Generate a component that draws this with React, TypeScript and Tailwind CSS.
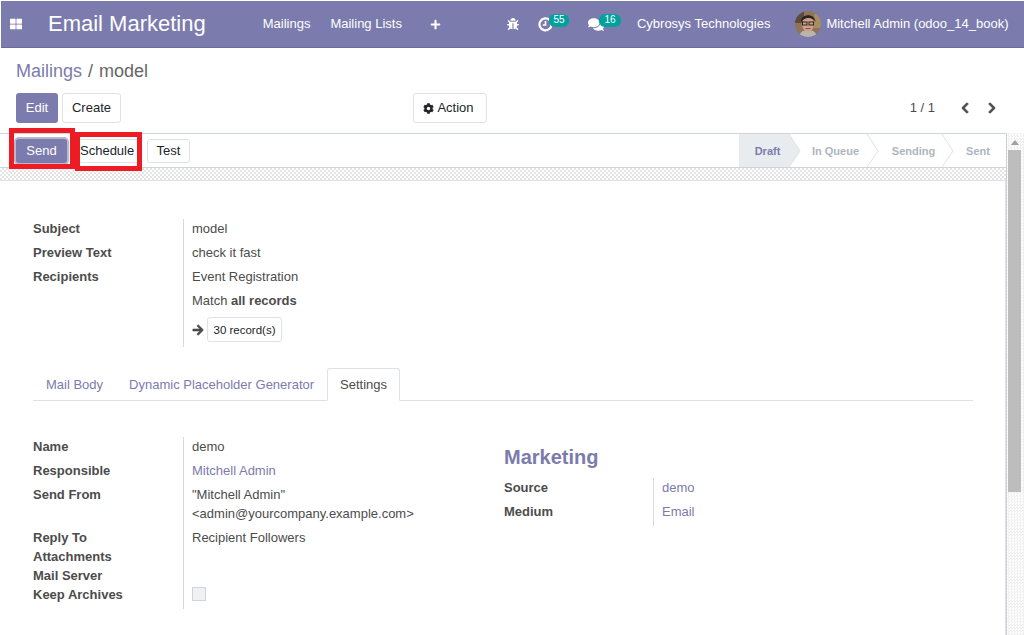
import type { ReactNode } from 'react'
import {
  FaArrowRight,
  FaBug,
  FaChevronLeft,
  FaChevronRight,
  FaCog,
  FaComments,
  FaPlus,
  FaThLarge,
} from 'react-icons/fa'

function Avatar() {
  return (
    <svg width="26" height="26" viewBox="0 0 26 26" className="shrink-0">
      <defs>
        <clipPath id="avatar-clip">
          <circle cx="13" cy="13" r="13" />
        </clipPath>
      </defs>
      <g clipPath="url(#avatar-clip)">
        <rect width="26" height="26" fill="#8f7458" />
        <rect x="0" y="0" width="9" height="12" fill="#5c4a3c" />
        <rect x="19" y="3" width="7" height="14" fill="#a88d62" />
        <path d="M4 26c1-6 5-7 9-7s8 1 9 7z" fill="#b9b4b0" />
        <ellipse cx="13" cy="13" rx="6" ry="7.5" fill="#cfa18c" />
        <path d="M6 11C5 3 20 1 20.5 11c-2-3-4-4-7-4s-5 1-7.500 4z" fill="#2a2320" />
        <rect x="7.500" y="11" width="4.500" height="3" fill="none" stroke="#2b2422" strokeWidth="1" />
        <rect x="14" y="11" width="4.500" height="3" fill="none" stroke="#2b2422" strokeWidth="1" />
        <path d="M10.500 17.500h5" stroke="#8d4a3c" strokeWidth="1.200" />
      </g>
    </svg>
  )
}

function ActivityIcon() {
  return (
    <svg width="15" height="15" viewBox="0 0 15 15" fill="none" stroke="currentColor" className="shrink-0">
      <path d="M11.800 3.200A6 6 0 1 0 13.500 7.500" strokeWidth="2.200" />
      <path d="M7.500 4v4H4.800" strokeWidth="1.600" />
    </svg>
  )
}

function Badge({ children, width }: { children: ReactNode; width: string }) {
  return (
    <span
      className={`absolute -top-[3px] left-[11px] flex h-[13px] items-center justify-center rounded-[6px] bg-[#00a09d] text-[10px] leading-none text-white ${width}`}
    >
      {children}
    </span>
  )
}

function Navbar() {
  return (
    <nav className="ml-px mt-px flex h-[47px] shrink-0 items-center whitespace-nowrap border-b border-[#6a6999] bg-[#7c7bad] text-[13px] text-white">
      <FaThLarge className="ml-[9px] h-[12px] w-[12px]" />
      <span className="ml-[26px] text-[22px] leading-none">Email Marketing</span>
      <span className="ml-[57px]">Mailings</span>
      <span className="ml-[20px]">Mailing Lists</span>
      <FaPlus className="ml-[28px] h-[11px] w-[11px]" />
      <FaBug className="ml-[66px] h-[12px] w-[12px]" />
      <span className="relative ml-[19px] flex">
        <ActivityIcon />
        <Badge width="w-[20px]">55</Badge>
      </span>
      <span className="relative ml-[35px] flex">
        <FaComments className="h-[15px] w-[16px]" />
        <Badge width="w-[22px]">16</Badge>
      </span>
      <span className="ml-[33px]">Cybrosys Technologies</span>
      <span className="ml-[25px] flex items-center gap-[5px]">
        <Avatar />
        Mitchell Admin (odoo_14_book)
      </span>
    </nav>
  )
}

function ControlPanel() {
  return (
    <div className="h-[85px] shrink-0 px-[16px]">
      <div className="pt-[11px] text-[18px] leading-[24px] text-[#666]">
        <span className="text-[#7c7bad]">Mailings</span>
        <span className="mx-[6px]">/</span>
        <span>model</span>
      </div>
      <div className="mt-[10px] flex items-center">
        <button className="h-[30px] w-[42px] rounded-[3px] bg-[#7c7bad] text-[13px] text-white">Edit</button>
        <button className="ml-[4px] h-[30px] w-[59px] rounded-[3px] border border-[#dee2e6] bg-white text-[13px] text-[#212529]">
          Create
        </button>
        <button className="ml-[292px] flex h-[30px] w-[74px] items-center justify-center gap-[3px] rounded-[3px] border border-[#dee2e6] bg-white pr-[3px] text-[13px] text-[#212529]">
          <FaCog className="h-[11px] w-[11px]" />
          Action
        </button>
        <span className="ml-auto text-[13px] text-[#4c4c4c]">1 / 1</span>
        <FaChevronLeft className="ml-[26px] h-[12px] w-[8px] text-[#4c4c4c]" stroke="currentColor" strokeWidth={40} />
        <FaChevronRight className="ml-[19px] mr-[12px] h-[12px] w-[8px] text-[#4c4c4c]" stroke="currentColor" strokeWidth={40} />
      </div>
    </div>
  )
}

function StageArrow({ fill }: { fill: string }) {
  return (
    <svg width="12" height="34" viewBox="0 0 12 34" className="absolute -right-[11px] top-0">
      <path d="M0 0L11 17L0 33" fill={fill} stroke="#dee2e6" strokeWidth="1" />
    </svg>
  )
}

function Stage({ label, width, active }: { label: string; width: string; active?: boolean }) {
  return (
    <div
      className={`relative flex h-full items-center justify-center text-[11px] font-bold ${width} ${
        active ? 'bg-[#e9ecef] text-[#7c7bad]' : 'text-[#adb5bd]'
      }`}
    >
      {label}
      {label !== 'Sent' && <StageArrow fill={active ? '#e9ecef' : '#fff'} />}
    </div>
  )
}

function StatusBar() {
  return (
    <div className="flex h-[35px] shrink-0 items-center justify-between border-y border-[#ced4da] bg-white pl-[16px]">
      <div className="flex items-center gap-[6px] text-[13px]">
        <button className="flex h-[24px] w-[51px] items-center justify-center rounded-[3px] bg-[#7c7bad] text-white ring-2 ring-[#b9b9c9]">
          Send
        </button>
        <button className="ml-[5px] flex h-[24px] w-[63px] items-center justify-start rounded-[3px] border border-[#dee2e6] bg-white pl-[1px] text-[#212529]">
          Schedule
        </button>
        <button className="flex h-[24px] w-[43px] items-center justify-center rounded-[3px] border border-[#dee2e6] bg-white text-[#212529]">
          Test
        </button>
      </div>
      <div className="flex h-full">
        <Stage label="Draft" width="w-[51px] pl-[6px]" active />
        <Stage label="In Queue" width="w-[78px] pl-[13px]" />
        <Stage label="Sending" width="w-[75px] pl-[16px]" />
        <Stage label="Sent" width="w-[63px] pl-[7px]" />
      </div>
    </div>
  )
}

function Field({
  label,
  children,
  rowClass = 'h-[24px]',
}: {
  label: string
  children?: ReactNode
  rowClass?: string
}) {
  return (
    <div className={`flex ${rowClass}`}>
      <div className="w-[150px] shrink-0 font-bold text-[#4c4c4c]">{label}</div>
      <div className="pl-[9px] text-[#4c4c4c]">{children}</div>
    </div>
  )
}

function Tabs() {
  return (
    <div className="mt-[21px] flex h-[33px] w-[940px] items-end border-b border-[#dee2e6]">
      <span className="ml-[13px] pb-[5px] text-[#7c7bad]">Mail Body</span>
      <span className="ml-[26px] pb-[5px] text-[#7c7bad]">Dynamic Placeholder Generator</span>
      <span className="-mb-px ml-[13px] flex h-[33px] w-[73px] items-center justify-center rounded-t-[3px] border border-[#dee2e6] border-b-white bg-white text-[#4c4c4c]">
        Settings
      </span>
    </div>
  )
}

function Scrollbar() {
  return (
    <div className="flex w-[18px] shrink-0 flex-col items-start border-l border-[#cfcfd8] bg-[repeating-conic-gradient(#f0f0f0_0_25%,#fff_0_50%)] bg-[length:3px_3px] pl-px">
      <svg width="8" height="5" viewBox="0 0 8 5" className="ml-[3px] mt-[7px]">
        <path d="M4 0L8 5H0z" fill="#a5a0a0" />
      </svg>
      <div className="mt-[5px] h-[342px] w-[13px] bg-[#bdbdbd]" />
    </div>
  )
}

export default function App() {
  return (
    <div className="relative flex h-[635px] w-[1024px] flex-col overflow-hidden bg-white font-['Liberation_Sans',Arial,sans-serif] text-[13px] leading-[20px]">
      <Navbar />
      <ControlPanel />
      <div className="flex min-h-0 flex-1">
        <div className="flex min-w-0 flex-1 flex-col">
          <StatusBar />
          <div className="min-h-0 flex-1 bg-[repeating-conic-gradient(#e4e4e4_0_25%,#fff_0_50%)] bg-[length:4px_4px] pt-[12px]">
            <div className="h-full border-r border-t border-[#dee2e6] bg-white pl-[33px] pt-[38px]">
              <div className="w-[400px]">
                <div className="relative">
                  <div className="absolute bottom-0 left-[150px] top-0 w-px bg-[#d9d9d9]" />
                  <Field label="Subject">model</Field>
                  <Field label="Preview Text">check it fast</Field>
                  <Field label="Recipients">Event Registration</Field>
                  <Field label="">
                    Match <b>all records</b>
                  </Field>
                  <Field label="" rowClass="h-[32px]">
                    <span className="flex items-center gap-[3px] pt-[2px]">
                      <FaArrowRight className="h-[12px] w-[12px] text-[#4c4c4c]" stroke="currentColor" strokeWidth={30} />
                      <span className="flex h-[25px] w-[75px] items-center justify-center rounded-[3px] border border-[#dee2e6] text-[11.5px] text-[#212529]">
                        30 record(s)
                      </span>
                    </span>
                  </Field>
                </div>
              </div>
              <Tabs />
              <div className="mt-[36px] flex">
                <div className="relative w-[471px]">
                  <div className="absolute bottom-0 left-[150px] top-0 w-px bg-[#d9d9d9]" />
                  <Field label="Name">demo</Field>
                  <Field label="Responsible">
                    <span className="text-[#7c7bad]">Mitchell Admin</span>
                  </Field>
                  <Field label="Send From" rowClass="h-[43px]">
                    <span className="block leading-[19px]">"Mitchell Admin"</span>
                    <span className="block leading-[19px]">&lt;admin@yourcompany.example.com&gt;</span>
                  </Field>
                  <Field label="Reply To" rowClass="h-[19px]">
                    Recipient Followers
                  </Field>
                  <Field label="Attachments" rowClass="h-[19px]" />
                  <Field label="Mail Server" rowClass="h-[19px]" />
                  <Field label="Keep Archives" rowClass="h-[24px]">
                    <span className="mt-[2px] block h-[14px] w-[14px] border border-[#ced4da] bg-[#f1f1f3]" />
                  </Field>
                </div>
                <div>
                  <div className="mt-[7px] text-[20px] font-bold leading-[26px] text-[#7c7bad]">Marketing</div>
                  <div className="relative mt-[8px]">
                    <div className="absolute bottom-0 left-[149px] top-0 w-px bg-[#d9d9d9]" />
                    <div className="flex h-[24px]">
                      <div className="w-[149px] font-bold text-[#4c4c4c]">Source</div>
                      <div className="pl-[9px] text-[#7c7bad]">demo</div>
                    </div>
                    <div className="flex h-[24px]">
                      <div className="w-[149px] font-bold text-[#4c4c4c]">Medium</div>
                      <div className="pl-[9px] text-[#7c7bad]">Email</div>
                    </div>
                  </div>
                </div>
              </div>
            </div>
          </div>
        </div>
        <Scrollbar />
      </div>
      {/* red highlight boxes added over the screenshot */}
      <div className="absolute left-[9px] top-[128px] h-[41px] w-[66px] border-[5px] border-[#ed1c24]" />
      <div className="absolute left-[75px] top-[132px] h-[39px] w-[67px] border-[5px] border-[#ed1c24]" />
    </div>
  )
}
